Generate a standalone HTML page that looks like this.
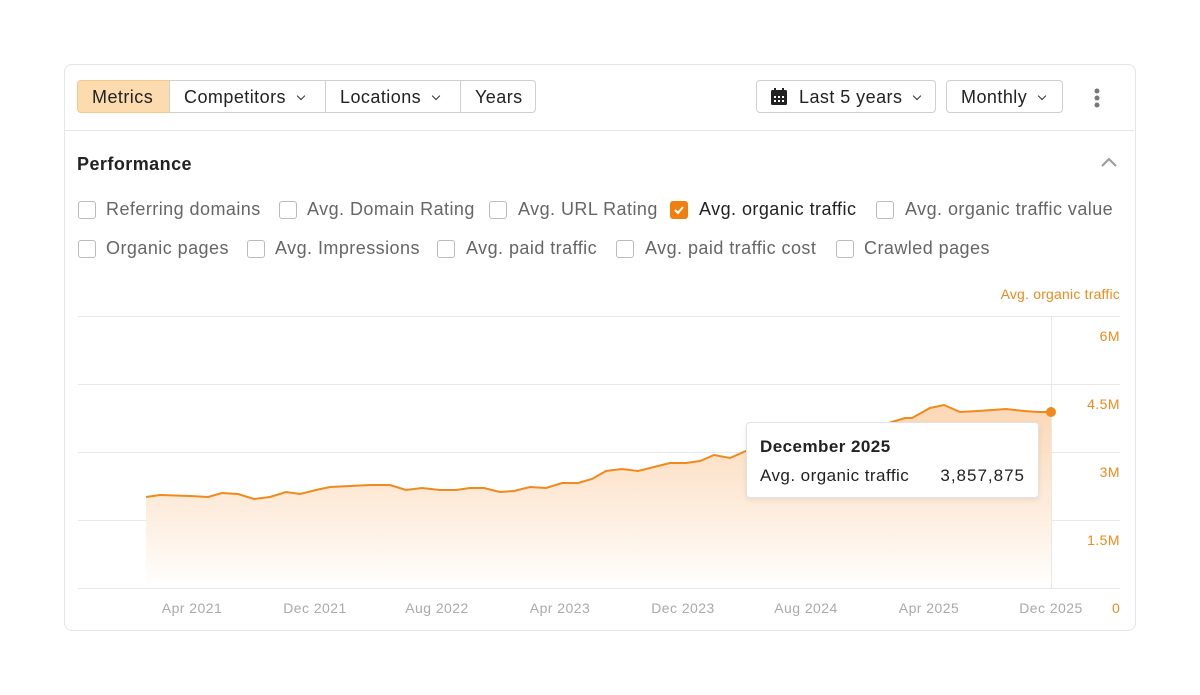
<!DOCTYPE html>
<html><head><meta charset="utf-8"><style>
body{margin:0;background:#fff;font-family:"Liberation Sans",sans-serif;width:1200px;height:695px;position:relative;overflow:hidden;letter-spacing:0.45px}
.card{position:absolute;left:64px;top:64px;width:1070px;height:565px;border:1px solid #e6e6e6;border-radius:8px}
.abs{position:absolute}
.btn{position:absolute;top:80px;height:33px;border:1px solid #cfcfcf;box-sizing:border-box;font-size:18px;color:#222;line-height:33px;padding-left:14px;white-space:nowrap}
.chev{display:inline-block;width:5px;height:5px;border-right:1.5px solid #333;border-bottom:1.5px solid #333;transform:rotate(45deg);margin-left:12px;position:relative;top:-4px}
.cb{position:absolute;font-size:18px;color:#666}
.cb i{position:absolute;left:0;top:2px;width:16px;height:16px;border:1px solid #bbb;border-radius:3px}
.cb span{position:absolute;white-space:nowrap}
.yl{position:absolute;right:80px;font-size:14px;color:#f08a1c}
.xl{position:absolute;top:600px;font-size:14px;color:#aaa;width:100px;text-align:center}
</style></head><body>
<div class="card"></div>
<div class="abs" style="left:65px;top:130px;width:1069px;height:1px;background:#e6e6e6"></div>
<div class="btn" style="left:77px;width:93px;background:#fcdcaf;border-color:#f3c98d;border-radius:4px 0 0 4px">Metrics</div>
<div class="btn" style="left:169px;width:157px">Competitors<span class="chev"></span></div>
<div class="btn" style="left:325px;width:136px">Locations<span class="chev"></span></div>
<div class="btn" style="left:460px;width:76px;border-radius:0 4px 4px 0">Years</div>
<div class="btn" style="left:756px;width:180px;border-radius:4px;padding-left:42px">Last 5 years<span class="chev"></span></div>
<svg class="abs" style="left:770px;top:88px" width="18" height="18" viewBox="0 0 18 18"><rect x="1" y="2" width="16" height="15" rx="1.5" fill="#222"/><rect x="4" y="0" width="2" height="4" fill="#222"/><rect x="12" y="0" width="2" height="4" fill="#222"/><g fill="#fff"><rect x="4" y="8" width="2" height="2"/><rect x="8" y="8" width="2" height="2"/><rect x="12" y="8" width="2" height="2"/><rect x="4" y="12" width="2" height="2"/><rect x="8" y="12" width="2" height="2"/><rect x="12" y="12" width="2" height="2"/></g></svg>
<div class="btn" style="left:946px;width:117px;border-radius:4px">Monthly<span class="chev"></span></div>
<svg class="abs" style="left:1092px;top:87px" width="10" height="22"><circle cx="5" cy="4" r="2.5" fill="#777"/><circle cx="5" cy="11" r="2.5" fill="#777"/><circle cx="5" cy="18" r="2.5" fill="#777"/></svg>
<div class="abs" style="left:77px;top:154px;font-size:18px;font-weight:bold;color:#222">Performance</div>
<svg class="abs" style="left:1100px;top:157px" width="18" height="12"><path d="M2 9 L9 2 L16 9" fill="none" stroke="#999" stroke-width="2"/></svg>
<div class="cb" style="left:78px;top:199px"><i></i><span style="left:28px">Referring domains</span></div>
<div class="cb" style="left:279px;top:199px"><i></i><span style="left:28px">Avg. Domain Rating</span></div>
<div class="cb" style="left:489px;top:199px"><i></i><span style="left:29px">Avg. URL Rating</span></div>
<div class="cb" style="left:670px;top:199px"><i style="background:#f07f10;border-color:#f07f10"></i><svg class="abs" style="left:2px;top:4px" width="14" height="14"><path d="M3 7 L6 10 L11 4" fill="none" stroke="#fff" stroke-width="2"/></svg><span style="left:29px;color:#222">Avg. organic traffic</span></div>
<div class="cb" style="left:876px;top:199px"><i></i><span style="left:29px">Avg. organic traffic value</span></div>
<div class="cb" style="left:78px;top:238px"><i></i><span style="left:28px">Organic pages</span></div>
<div class="cb" style="left:247px;top:238px"><i></i><span style="left:28px">Avg. Impressions</span></div>
<div class="cb" style="left:437px;top:238px"><i></i><span style="left:29px">Avg. paid traffic</span></div>
<div class="cb" style="left:616px;top:238px"><i></i><span style="left:29px">Avg. paid traffic cost</span></div>
<div class="cb" style="left:836px;top:238px"><i></i><span style="left:28px">Crawled pages</span></div>
<div class="abs" style="right:80px;top:286px;font-size:14px;color:#f08a1c;letter-spacing:0.2px">Avg. organic traffic</div>
<svg class="abs" style="left:0;top:0" width="1200" height="695">
<defs><linearGradient id="g" x1="0" y1="0" x2="0" y2="1"><stop offset="0" stop-color="#fbd3ad" stop-opacity=".9"/><stop offset="1" stop-color="#fff" stop-opacity="1"/></linearGradient></defs>
<g stroke="#e8e8e8" stroke-width="1"><line x1="78" y1="316.5" x2="1120" y2="316.5"/><line x1="78" y1="384.5" x2="1120" y2="384.5"/><line x1="78" y1="452.5" x2="1120" y2="452.5"/><line x1="78" y1="520.5" x2="1120" y2="520.5"/><line x1="78" y1="588.5" x2="1120" y2="588.5"/><line x1="1051.5" y1="316" x2="1051.5" y2="588"/></g>
<path d="M146 497 L160 495 L190 496 L208 497 L222 493 L238 494 L254 499 L270 497 L286 492 L300 494 L316 490 L330 487 L350 486 L370 485 L390 485 L406 490 L422 488 L440 490 L456 490 L470 488 L484 488 L500 492 L514 491 L530 487 L546 488 L562 483 L578 483 L592 479 L606 471 L622 469 L638 471 L654 467 L670 463 L686 463 L700 461 L714 455 L730 458 L746 451 L780 445 L820 440 L860 432 L905 418 L912 418 L930 408 L944 405 L960 412 L978 411 L992 410 L1006 409 L1024 411 L1038 412 L1051 412 L1051 588 L146 588 Z" fill="url(#g)"/>
<path d="M146 497 L160 495 L190 496 L208 497 L222 493 L238 494 L254 499 L270 497 L286 492 L300 494 L316 490 L330 487 L350 486 L370 485 L390 485 L406 490 L422 488 L440 490 L456 490 L470 488 L484 488 L500 492 L514 491 L530 487 L546 488 L562 483 L578 483 L592 479 L606 471 L622 469 L638 471 L654 467 L670 463 L686 463 L700 461 L714 455 L730 458 L746 451 L780 445 L820 440 L860 432 L905 418 L912 418 L930 408 L944 405 L960 412 L978 411 L992 410 L1006 409 L1024 411 L1038 412 L1051 412" fill="none" stroke="#f08a1c" stroke-width="2"/>
<circle cx="1051" cy="412" r="5" fill="#f08a1c"/>
</svg>
<div class="yl" style="top:328px">6M</div>
<div class="yl" style="top:396px">4.5M</div>
<div class="yl" style="top:464px">3M</div>
<div class="yl" style="top:532px">1.5M</div>
<div class="abs" style="left:1112px;top:600px;font-size:14px;color:#f08a1c">0</div>
<div class="xl" style="left:142px">Apr 2021</div>
<div class="xl" style="left:265px">Dec 2021</div>
<div class="xl" style="left:387px">Aug 2022</div>
<div class="xl" style="left:510px">Apr 2023</div>
<div class="xl" style="left:633px">Dec 2023</div>
<div class="xl" style="left:756px">Aug 2024</div>
<div class="xl" style="left:879px">Apr 2025</div>
<div class="xl" style="left:1001px">Dec 2025</div>
<div class="abs" style="left:746px;top:422px;width:293px;height:76px;background:#fff;border:1px solid #e2e2e2;border-radius:4px;box-shadow:0 2px 6px rgba(0,0,0,.08);box-sizing:border-box">
<div class="abs" style="left:13px;top:14px;font-size:17px;font-weight:bold;color:#222">December 2025</div>
<div class="abs" style="left:13px;top:43px;font-size:17px;color:#222">Avg. organic traffic</div>
<div class="abs" style="right:13px;top:43px;font-size:17px;color:#222;letter-spacing:1px">3,857,875</div>
</div>
</body></html>
